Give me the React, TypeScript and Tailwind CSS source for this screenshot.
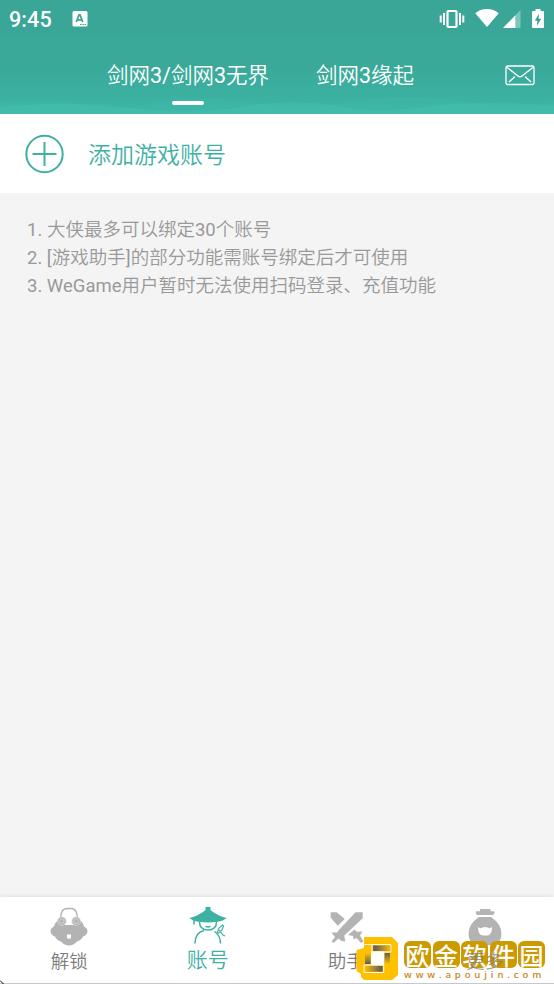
// App.tsx
import type { ReactNode } from 'react'

const NOTES = [
  '大侠最多可以绑定30个账号',
  '[游戏助手]的部分功能需账号绑定后才可使用',
  'WeGame用户暂时无法使用扫码登录、充值功能',
]

// 中文用细一档的字重，数字和英文保持常规
function Mixed({ text }: { text: string }) {
  return (
    <>
      {text.split(/([\x20-\x7e]+)/).map((part, i) => (
        i % 2 === 1 ? <span key={i} className="font-normal">{part}</span> : part
      ))}
    </>
  )
}

function StatusBar() {
  return (
    <div className="flex h-[37px] items-center bg-[#3aa698] pl-[9px] pr-[10px] text-white">
      <span className="pt-0.5 text-[21.5px] font-medium leading-none tracking-[0.1px]">9:45</span>
      <svg className="ml-5" width="16" height="18" viewBox="0 0 16 18">
        <rect x="0.5" y="1" width="15" height="15.5" rx="1.5" fill="white" />
        <path d="M4.300 12 7 4.800h1l2.700 7.200M5.300 9.800h4.400" fill="none" stroke="#3aa698" strokeWidth="1.8" />
        <path d="M8 14.500h6.500" stroke="#3aa698" strokeWidth="1.2" strokeDasharray="1.5 0.8" />
      </svg>
      <svg className="ml-auto" width="26" height="20" viewBox="0 0 26 20" fill="none" stroke="white">
        <rect x="8.500" y="2" width="9" height="16" rx="1" strokeWidth="2.200" />
        <path d="M5 4v12M21 4v12" strokeWidth="2" />
        <path d="M1.700 6.500v7M24.300 6.500v7" strokeWidth="2" />
      </svg>
      <svg className="ml-[10px]" width="24" height="20" viewBox="0 0 24 20" fill="white">
        <path d="M0.300 4.200C3.500 1.500 7.300 0 12 0s8.500 1.500 11.700 4.200L12 18z" />
      </svg>
      <svg className="ml-[4px]" width="18" height="20" viewBox="0 0 18 20" fill="white">
        <path d="M17.500 1v18H0z" opacity="0.35" />
        <path d="M12.300 6.400V19H0z" />
      </svg>
      <svg className="ml-[11px]" width="12" height="20" viewBox="0 0 12 20">
        <path d="M3.500 0h5v2H11a1 1 0 0 1 1 1v15a1 1 0 0 1-1 1H1a1 1 0 0 1-1-1V3a1 1 0 0 1 1-1h2.500z" fill="white" />
        <path d="M7 4.500 2.800 11.800H5.300L4.800 17 9.200 9.800H6.600z" fill="#3aa698" />
      </svg>
    </div>
  )
}

function Header() {
  return (
    <div className="relative h-[77px] bg-linear-to-b from-[#3aa99a] from-40% to-[#3cb5a6] text-white">
      {/* 云纹背景 */}
      <svg className="absolute bottom-0 left-0" width="554" height="20" viewBox="0 0 554 20">
        <path d="M0 8Q45 3 84 11T157 7Q215 1 260 10T350 7Q430 -2 480 10T554 6V20H0z" fill="#45bfb1" opacity="0.22" />
        <path d="M0 13Q70 6 132 14T260 10Q305 6 345 13T447 10Q505 7 554 12V20H0z" fill="#48c5b7" opacity="0.35" />
      </svg>
      <div className="relative flex h-full pl-[107px] pr-[19px] pt-[23px] text-[21.5px] leading-8">
        <div className="flex w-[162px] flex-col items-center whitespace-nowrap">
          <span><Mixed text="剑网3/剑网3无界" /></span>
          <span className="mr-px mt-[9px] h-1 w-8 rounded-full bg-white" />
        </div>
        <span className="ml-[47px]"><Mixed text="剑网3缘起" /></span>
        <svg className="ml-auto mt-[5px]" width="30" height="22" viewBox="0 0 30 22" fill="none" stroke="white" strokeWidth="1.300">
          <rect x="1" y="1" width="28" height="18.500" rx="1.500" />
          <path d="m1.500 2 11.500 9q2 1.500 4 0l11.500-9M4 17l6-5.500M26 17 20 11.500" />
        </svg>
      </div>
    </div>
  )
}

function LockIcon() {
  return (
    <svg width="40" height="40" viewBox="0 0 40 40">
      <path d="M11.700 13Q11.500 2.500 18 2.500h4q6.500 0 6.300 10.500" fill="none" stroke="#b3b3b3" strokeWidth="1.500" />
      <path d="M8 15Q5.500 17 5 20.500 1.500 22 1.500 25.500q.500 3.500 4.500 5 1.500 3.500 6 5 3.500 4 8 4t8-4q4.500-1.500 6-5 4-1.500 4.500-5 0-3.500-3.500-5-.500-3.500-3-5.500L25.500 19h-11z" fill="#b3b3b3" />
      <g fill="#b3b3b3" stroke="#dedede" strokeWidth="0.700">
        <circle cx="12.800" cy="15.200" r="4.300" />
        <circle cx="27.200" cy="15.200" r="4.300" />
        <circle cx="12.800" cy="15.200" r="2.300" />
        <circle cx="27.200" cy="15.200" r="2.300" />
      </g>
      <path d="M18 28.500h4v4h-4z" fill="white" />
    </svg>
  )
}

function HeroIcon() {
  return (
    <svg width="40" height="40" viewBox="0 0 40 40" fill="none" stroke="#3fb1a3" strokeWidth="1.500">
      <path d="M17.500 1.300q2.500-1 5 0v2.700q5.500 5 16 8-3 3-9 3.800-9.500 1.500-19 0-6-.800-9-3.800 10.500-3 16-8z" fill="#3fb1a3" stroke="none" />
      <path d="M11.500 15.500q0 8.500 8.500 8.500t8.500-8.500M17.500 20q2.500 2 5 0M6 14v4.500" />
      <path d="M7 37.500Q7 26.500 16 24.500M32.500 37.500q0-8-6-12" />
      <path d="m29 27 2-5 3.500-3 1 1-1.500 4-4 3.500M31 24l4 5 2 1" strokeWidth="1.200" />
    </svg>
  )
}

function SwordsIcon() {
  return (
    <svg width="40" height="40" viewBox="0 0 40 40" fill="#b3b3b3">
      <path d="M29.500 6.300h7.200v6L18.300 29.500l1 6-3.800-.500-3-2.500-5 4.500-2-1.500 3.500-4.500-3.500-4.500h5.500l1-1.500z" />
      <path d="M4.700 6.300h6l8 6.700-7 6.700-7-8z" />
      <path d="m22 29 6.500-5.500 2.500 2.300 5.500-.300-2.500 4 3.500 6-2.500 1.500-4.500-5-3 1.500-.500-3.500z" />
    </svg>
  )
}

function BagIcon() {
  return (
    <svg width="40" height="40" viewBox="0 0 40 40" fill="#b3b3b3">
      <path d="M15 3h10.500v2.200h3.800q1 2-1.300 3.800H12Q10 7.200 11 5.200h4zM14 11h12q10.500 7 10.500 17 0 10-9 11h-15q-9-1-9-11 0-10 10.500-17z" />
      <path d="M13 21q2 2 4.500.500 2.500-1 5 0Q25 23 27 21q0 8.500-5 8.500h-4q-5 0-5-8.500z" fill="white" />
    </svg>
  )
}

interface TabProps {
  icon: ReactNode
  label: string
  active?: boolean
  raised?: boolean
}

function Tab({ icon, label, active, raised }: TabProps) {
  return (
    <div className="flex flex-col items-center pt-[9px]">
      {icon}
      {active && <span className="mt-[-1px] text-[21px] leading-[30px] text-[#3fb1a3]">{label}</span>}
      {!active && (
        <span className={`mt-px text-[18.5px] leading-[30px] text-[#7c7c7c] ${raised ? 'relative z-10 opacity-75' : ''}`}>{label}</span>
      )}
    </div>
  )
}

function Watermark() {
  return (
    <div className="absolute left-[356px] top-[40px] flex">
      <svg width="43" height="44" viewBox="0 0 43 44">
        <defs>
          <linearGradient id="to-right">
            <stop offset="0.150" stopColor="#686358" />
            <stop offset="1" stopColor="#ffc000" />
          </linearGradient>
          <linearGradient id="to-left" x1="1" x2="0">
            <stop offset="0.150" stopColor="#686358" />
            <stop offset="1" stopColor="#ffc000" />
          </linearGradient>
          <linearGradient id="to-top" x1="0" x2="0" y1="1" y2="0">
            <stop offset="0.050" stopColor="#686358" />
            <stop offset="0.600" stopColor="#ffc000" />
          </linearGradient>
          <linearGradient id="to-bottom" x1="0" x2="0" y1="0" y2="1">
            <stop offset="0.050" stopColor="#686358" />
            <stop offset="0.600" stopColor="#ffc000" />
          </linearGradient>
        </defs>
        <path d="M8 0H36l6 6v32l-6 5H8l-3-3v-3L.500 34V13L8 11z" fill="#ffc000" />
        <path d="M15 14.500h13v13.500H15z" fill="white" />
        <path d="M17 8.500h18V14H17z" fill="url(#to-right)" />
        <path d="M9 9h5.700v18H9z" fill="url(#to-top)" />
        <path d="M28.500 16H34v18.500h-5.500z" fill="url(#to-bottom)" />
        <path d="M9 29h17.700v5.700H9z" fill="url(#to-left)" />
        <path d="M8 7.500h8v20.500M16 7.500h19M35 8v7H16M27.700 15v20.500M8 28h20M8 28v7.500h19.700" fill="none" stroke="white" strokeWidth="0.900" />
      </svg>
      <div className="ml-[5px] pt-1">
        <div className="flex gap-[1.500px] font-['Noto_Sans_CJK_SC'] text-[24px] font-medium leading-[27px] text-white">
          {'欧金软件园'.split('').map(c => (
            <span key={c} className="flex h-[27px] w-[27px] items-center justify-center rounded-[6px] bg-[#cc9900]">{c}</span>
          ))}
        </div>
        <div className="mt-px font-['Open_Sans'] text-[9.500px] font-semibold leading-3 tracking-[3.900px] text-[#c98722]">www.apoujin.com</div>
      </div>
    </div>
  )
}

export default function App() {
  return (
    <div className="flex h-[984px] w-[554px] flex-col overflow-hidden bg-[#f4f4f4] font-[Roboto,'Noto_Sans_CJK_SC',sans-serif] font-[350]">
      <StatusBar />
      <Header />

      <div className="flex h-[79px] items-center gap-6 bg-white pl-6 text-[23px] text-[#3fb1a3]">
        <svg width="40" height="40" viewBox="0 0 40 40" fill="none" stroke="#3fb1a3">
          <circle cx="20.500" cy="20" r="18.200" strokeWidth="2" />
          <path d="M20.500 8v24M8.500 20h24" strokeWidth="2" />
        </svg>
        <span className="pt-[5px]">添加游戏账号</span>
      </div>

      <ol className="flex-1 pl-[27px] pt-6 text-[18.500px] leading-[27.800px] text-[#999999]">
        {NOTES.map((note, i) => (
          <li key={note}><Mixed text={`${i + 1}. ${note}`} /></li>
        ))}
      </ol>

      {/* 底部导航 */}
      <div className="relative h-[87px] border-b border-[#c8c8c8] bg-white shadow-[0_-2px_3px_#e6e6e6]">
        <div className="grid grid-cols-4">
          <Tab icon={<LockIcon />} label="解锁" />
          <Tab icon={<HeroIcon />} label="账号" active />
          <Tab icon={<SwordsIcon />} label="助手" />
          <Tab icon={<BagIcon />} label="更多" raised />
        </div>
        <Watermark />
        <svg className="absolute -bottom-px left-0" width="4" height="4" viewBox="0 0 4 4">
          <path d="M0 .500 3.500 4" stroke="black" />
        </svg>
      </div>
    </div>
  )
}
